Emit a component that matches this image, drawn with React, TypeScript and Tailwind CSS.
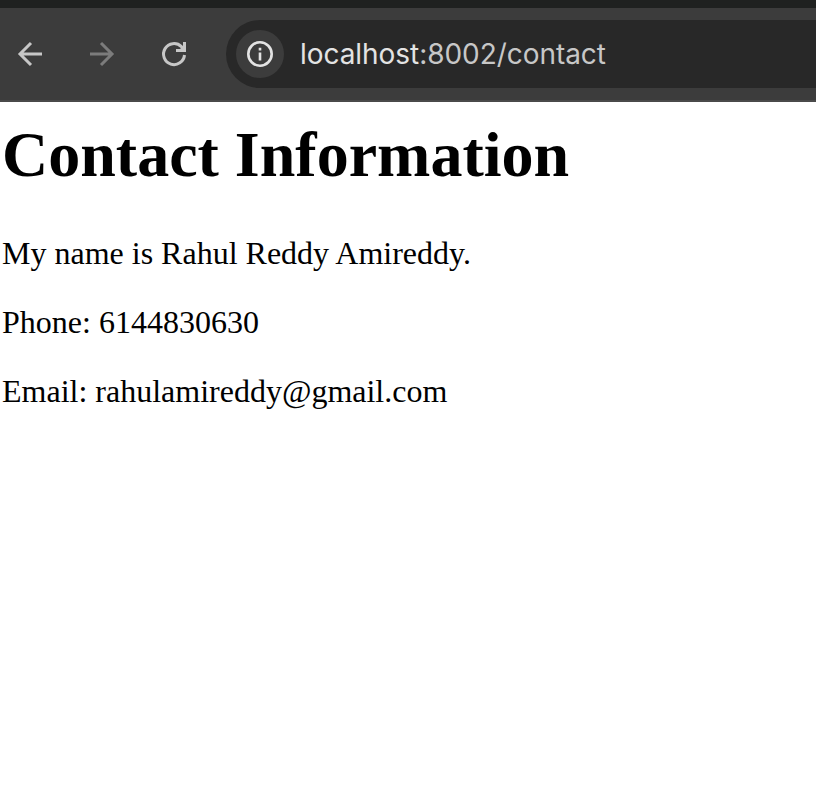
export default function App() {
  return (
    <div className="flex h-[788px] w-[816px] flex-col overflow-hidden bg-white">
      <header className="flex h-[102px] flex-col border-b-2 border-[#4a4a4a] bg-[#3c3c3c]">
        <div className="h-2 shrink-0 bg-[#1f2120]" />
        <div className="flex flex-1 items-center">
          <nav className="flex w-[226px] shrink-0 items-center gap-10 pl-[14px]">
            <svg className="size-8" viewBox="0 0 32 32" fill="none" stroke="#c7c7c7" strokeWidth="3"><path d="M28 16H6M17 5 6 16l11 11" /></svg>
            <svg className="size-8" viewBox="0 0 32 32" fill="none" stroke="#7c7c7c" strokeWidth="3"><path d="M4 16h22M15 5l11 11-11 11" /></svg>
            <svg className="size-8" viewBox="0 0 32 32" fill="none" stroke="#c7c7c7" strokeWidth="3"><path d="M26.500 17A10.500 10.500 0 1 1 23.400 8.600L26 11.200" /><path d="M28 4v10H18v-3h4l3-3V4z" fill="#c7c7c7" stroke="none" /></svg>
          </nav>
          <div className="flex h-[68px] flex-1 items-center rounded-l-full bg-[#282828] pl-[10px]">
            <div className="flex size-12 items-center justify-center rounded-full bg-[#3c3c3c]">
              <svg className="size-7" viewBox="0 0 28 28" fill="none" stroke="#e3e3e3" strokeWidth="2.600"><circle cx="14" cy="14" r="11.700" /><path d="M14 12.500V20.500M14 7.700v2.700" /></svg>
            </div>
            <span className="ml-4 whitespace-nowrap font-['Inter',sans-serif] text-[28px] leading-9 tracking-[-0.05px] text-[#c7c7c7]"><span className="text-[#e3e3e3]">localhost</span>:8002/contact</span>
          </div>
        </div>
      </header>
      <main className="pl-[2px] pt-[17px] font-['Liberation_Serif',serif] text-black">
        <h1 className="text-[64px] font-bold leading-[72px]">Contact Information</h1>
        <p className="mt-[44px] text-[32px] leading-[37px]">My name is Rahul Reddy Amireddy.</p>
        <p className="mt-8 text-[32px] leading-[37px]">Phone: 6144830630</p>
        <p className="mt-8 text-[32px] leading-[37px]">Email: rahulamireddy@gmail.com</p>
      </main>
    </div>
  );
}
